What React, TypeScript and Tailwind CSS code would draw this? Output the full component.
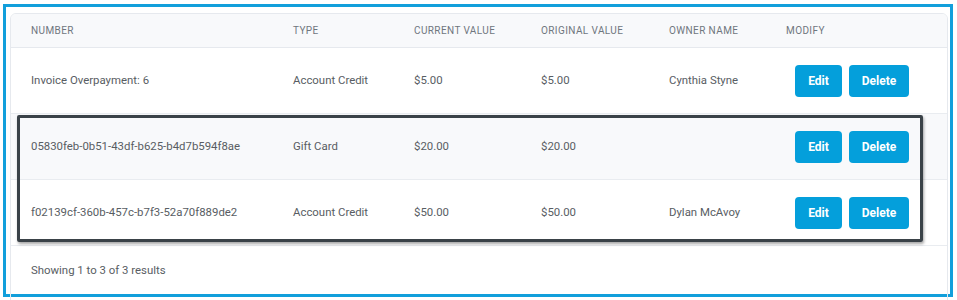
import React from "react";

const rows = [
  { num: "Invoice Overpayment: 6", type: "Account Credit", cur: "$5.00", orig: "$5.00", owner: "Cynthia Styne", bg: "bg-white" },
  { num: "05830feb-0b51-43df-b625-b4d7b594f8ae", type: "Gift Card", cur: "$20.00", orig: "$20.00", owner: "", bg: "bg-[#f8f9fb]" },
  { num: "f02139cf-360b-457c-b7f3-52a70f889de2", type: "Account Credit", cur: "$50.00", orig: "$50.00", owner: "Dylan McAvoy", bg: "bg-white" },
];

const cols = "grid grid-cols-[262px_121px_127px_128px_117px_1fr] items-center";

export default function App() {
  return (
    <div className="w-[957px] h-[300px] bg-white pl-[3px] pt-[4px]" style={{ fontFamily: "Roboto, 'Liberation Sans', sans-serif" }}>
      <div className="relative w-[950px] h-[293px] border-[3px] border-[#129fdb] bg-white pl-[4px] pt-[6px] pr-[2px]">
        <div className="border border-[#e6e9ee] rounded-t-[6px] h-[290px] overflow-hidden">
          <div className={`${cols} h-[34px] bg-[#f8f9fb] border-b border-[#e6e9ee] pl-[20px] text-[10px] tracking-[0.04em] text-[#6f767e] uppercase`}>
            <div>Number</div>
            <div>Type</div>
            <div>Current Value</div>
            <div>Original Value</div>
            <div>Owner Name</div>
            <div>Modify</div>
          </div>
          {rows.map((r, i) => (
            <div key={i} className={`${cols} h-[66px] ${r.bg} border-b border-[#e9ecf0] pl-[20px] text-[11.4px] text-[#585d63]`}>
              <div>{r.num}</div>
              <div>{r.type}</div>
              <div>{r.cur}</div>
              <div>{r.orig}</div>
              <div>{r.owner}</div>
              <div className="flex gap-[7px] pl-[9px]">
                <button className="w-[47px] h-[32px] rounded-[4px] bg-[#049fdb] text-white text-[12px] font-bold">Edit</button>
                <button className="w-[60px] h-[32px] rounded-[4px] bg-[#049fdb] text-white text-[12px] font-bold">Delete</button>
              </div>
            </div>
          ))}
          <div className="pl-[20px] h-[50px] flex items-center text-[11.4px] text-[#585d63]">Showing 1 to 3 of 3 results</div>
        </div>
        <div className="absolute left-[11px] top-[108px] w-[906px] h-[127px] border-[3px] border-[#3a4248] rounded-[2px] shadow-[1px_2px_3px_rgba(0,0,0,0.35)] pointer-events-none" />
      </div>
    </div>
  );
}
